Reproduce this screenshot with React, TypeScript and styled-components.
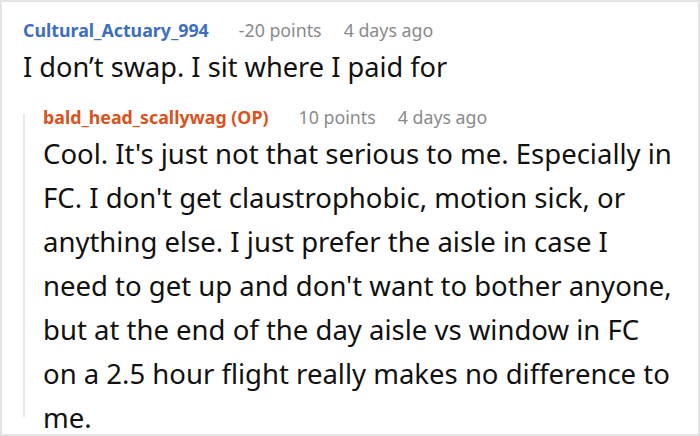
import styled, { createGlobalStyle } from 'styled-components';

const GlobalStyle = createGlobalStyle`
  html, body {
    margin: 0;
    padding: 0;
    background: #ffffff;
  }
  body {
    font-family: 'Noto Sans', 'Open Sans', sans-serif;
  }
`;

const Frame = styled.div`
  box-sizing: border-box;
  width: 700px;
  height: 436px;
  border: 2px solid #e4e4e4;
  overflow: hidden;
  padding: 13px 21px 0 21px;
  background: #fff;
`;

const Comment = styled.div`
  display: flex;
  flex-direction: column;
`;

const Meta = styled.div`
  display: flex;
  align-items: baseline;
  gap: 22px;
  font-size: 17.8px;
  line-height: 30px;
`;

const Author = styled.span<{ $op?: boolean }>`
  font-weight: 700;
  color: ${({ $op }) => ($op ? '#d9531e' : '#3d6fbd')};
  margin-right: 8px;
`;

const Muted = styled.span`
  color: #8a8a8a;
`;

const Body = styled.p<{ $size: number }>`
  margin: 0;
  color: #111;
  font-size: ${({ $size }) => $size}px;
  line-height: 44px;
`;

const Thread = styled.div`
  display: flex;
  margin-top: 13px;
`;

const Rail = styled.div`
  flex: 0 0 2px;
  margin: 12px 0 23px;
  background: #e8e8e8;
`;

const Replies = styled.div`
  flex: 1;
  min-width: 0;
  padding-left: 18px;
`;

export default function App() {
  return (
    <>
      <GlobalStyle />
      <Frame>
        <Comment>
          <Meta>
            <Author>Cultural_Actuary_994</Author>
            <Muted>-20 points</Muted>
            <Muted>4 days ago</Muted>
          </Meta>
          <Body $size={27.2}>I don’t swap. I sit where I paid for</Body>
          <Thread>
            <Rail />
            <Replies>
              <Comment>
                <Meta>
                  <Author $op>bald_head_scallywag (OP)</Author>
                  <Muted>10 points</Muted>
                  <Muted>4 days ago</Muted>
                </Meta>
                <Body $size={27.5}>
                  Cool. It's just not that serious to me. Especially in FC. I don't get claustrophobic, motion sick, or
                  anything else. I just prefer the aisle in case I need to get up and don't want to bother anyone, but
                  at the end of the day aisle vs window in FC on a 2.5 hour flight really makes no difference to me.
                </Body>
              </Comment>
            </Replies>
          </Thread>
        </Comment>
      </Frame>
    </>
  );
}
